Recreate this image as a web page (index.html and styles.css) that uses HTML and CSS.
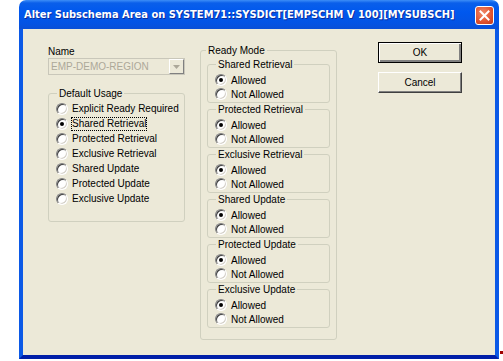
FILE: index.html
```html
<!DOCTYPE html>
<html lang="en">
<head>
    <meta charset="UTF-8">
    <title>Alter Subschema Area</title>
    <link rel="stylesheet" href="styles.css">
</head>
<body>
    <div class="window">
        <div class="titlebar">
            <span class="title">Alter Subschema Area on SYSTEM71::SYSDICT[EMPSCHM V 100][MYSUBSCH]</span>
            <span class="close">
                <svg width="11" height="11" viewBox="0 0 11 11"><path d="M1.5 1.5 L9.5 9.5 M9.5 1.5 L1.5 9.5" stroke="#fff" stroke-width="2" stroke-linecap="square"/></svg>
            </span>
        </div>
        <div class="client">
            <div class="left">
                <div class="name-label">Name</div>
                <div class="combo">
                    <span class="combo-text">EMP-DEMO-REGION</span>
                    <span class="combo-btn">
                        <svg width="7" height="4" viewBox="0 0 7 4"><path d="M0 0 H7 L3.5 4 Z" fill="#aca899"/></svg>
                    </span>
                </div>
                <fieldset class="group usage">
                    <legend>Default Usage</legend>
                    <div class="opt"><span class="radio"></span><span>Explicit Ready Required</span></div>
                    <div class="opt"><span class="radio on"></span><span class="focus">Shared Retrieval</span></div>
                    <div class="opt"><span class="radio"></span><span>Protected Retrieval</span></div>
                    <div class="opt"><span class="radio"></span><span>Exclusive Retrieval</span></div>
                    <div class="opt"><span class="radio"></span><span>Shared Update</span></div>
                    <div class="opt"><span class="radio"></span><span>Protected Update</span></div>
                    <div class="opt"><span class="radio"></span><span>Exclusive Update</span></div>
                </fieldset>
            </div>

            <fieldset class="group ready">
                <legend>Ready Mode</legend>
                <fieldset class="group sub">
                    <legend>Shared Retrieval</legend>
                    <div class="opt"><span class="radio on"></span><span>Allowed</span></div>
                    <div class="opt"><span class="radio"></span><span>Not Allowed</span></div>
                </fieldset>
                <fieldset class="group sub">
                    <legend>Protected Retrieval</legend>
                    <div class="opt"><span class="radio on"></span><span>Allowed</span></div>
                    <div class="opt"><span class="radio"></span><span>Not Allowed</span></div>
                </fieldset>
                <fieldset class="group sub">
                    <legend>Exclusive Retrieval</legend>
                    <div class="opt"><span class="radio on"></span><span>Allowed</span></div>
                    <div class="opt"><span class="radio"></span><span>Not Allowed</span></div>
                </fieldset>
                <fieldset class="group sub">
                    <legend>Shared Update</legend>
                    <div class="opt"><span class="radio on"></span><span>Allowed</span></div>
                    <div class="opt"><span class="radio"></span><span>Not Allowed</span></div>
                </fieldset>
                <fieldset class="group sub">
                    <legend>Protected Update</legend>
                    <div class="opt"><span class="radio on"></span><span>Allowed</span></div>
                    <div class="opt"><span class="radio"></span><span>Not Allowed</span></div>
                </fieldset>
                <fieldset class="group sub">
                    <legend>Exclusive Update</legend>
                    <div class="opt"><span class="radio on"></span><span>Allowed</span></div>
                    <div class="opt"><span class="radio"></span><span>Not Allowed</span></div>
                </fieldset>
            </fieldset>

            <div class="buttons">
                <div class="btn default">OK</div>
                <div class="btn">Cancel</div>
            </div>
        </div>
    </div>
    <span class="stray"></span>
</body>
</html>
```

FILE: styles.css
```css
body {
    margin: 0;
    background: #fff;
    font-family: "Liberation Sans", Arial, sans-serif;
    font-size: 10px;
    color: #000;
}

.window {
    margin-left: 19px;
    width: 480px;
    height: 359px;
    display: flex;
    flex-direction: column;
}

.titlebar {
    height: 29px;
    display: flex;
    align-items: center;
    padding: 0 5px 0 5px;
    border-radius: 7px 7px 0 0;
    background: linear-gradient(#3d8ef7 0, #0a5fea 3px, #0058ee 12px, #0453e3 24px, #0a4fd6 29px);
}

.title {
    flex: 1;
    min-width: 0;
    overflow: hidden;
    color: #fff;
    font-family: "DejaVu Sans Condensed", "DejaVu Sans", sans-serif;
    font-weight: bold;
    font-size: 11px;
    text-shadow: 1px 1px 0 #0b2c9c;
    white-space: nowrap;
}

.close {
    width: 19px;
    height: 19px;
    flex: none;
    box-sizing: border-box;
    border: 1px solid #fff;
    border-radius: 3px;
    background: radial-gradient(circle at 40% 35%, #f08a6a, #e2522e 60%, #c23a1a);
    display: flex;
    align-items: center;
    justify-content: center;
    margin-top: 1px;
}

.client {
    flex: 1;
    display: flex;
    align-items: flex-start;
    background: #ece9d8;
    border: 4px solid #0b59e6;
    border-top: none;
    border-bottom-color: #001ea8;
    padding: 14px 0 0 25px;
}

.left {
    width: 137px;
    padding-top: 2px;
}

.name-label {
    line-height: 13px;
}

.combo {
    height: 17px;
    display: flex;
    align-items: stretch;
    border: 1px solid #c9c7ba;
    box-sizing: border-box;
    margin-bottom: 12px;
}

.combo-text {
    flex: 1;
    color: #aca899;
    line-height: 15px;
    padding-left: 2px;
}

.combo-btn {
    width: 15px;
    display: flex;
    align-items: center;
    justify-content: center;
    background: #ece9d8;
    border: 1px solid;
    border-color: #fff #808080 #808080 #fff;
    box-sizing: border-box;
}

.group {
    margin: 0;
    min-width: 0;
    border: 1px solid #d0d0bf;
    border-radius: 3px;
    padding: 1px 6px 15px 7px;
}

.group legend {
    padding: 0 2px;
    margin-left: 1px;
    line-height: 13px;
}

.opt {
    display: flex;
    align-items: center;
    height: 15px;
    white-space: nowrap;
}

.radio {
    width: 12px;
    height: 12px;
    box-sizing: border-box;
    border-radius: 50%;
    border: 1px solid;
    border-color: #808080 #fff #fff #808080;
    box-shadow: inset 1px 1px 0 #404040, inset -1px -1px 0 #d4d0c8;
    background: #fff;
    margin-right: 4px;
    display: flex;
    align-items: center;
    justify-content: center;
    flex: none;
}

.radio.on::after {
    content: "";
    width: 4px;
    height: 4px;
    border-radius: 50%;
    background: #000;
}

.focus {
    outline: 1px dotted #000;
    outline-offset: 0;
    line-height: 12px;
}

.ready {
    width: 137px;
    box-sizing: border-box;
    margin-left: 15px;
    margin-top: 1px;
    padding: 1px 6px 11px 6px;
}

.ready > legend {
    margin-left: -1px;
}

.sub {
    padding: 2px 6px 1px 7px;
}

.sub .opt {
    height: 14px;
}

.buttons {
    margin-left: 41px;
    margin-top: -1px;
    width: 84px;
    display: flex;
    flex-direction: column;
    gap: 9px;
}

.btn {
    height: 21px;
    box-sizing: border-box;
    display: flex;
    align-items: center;
    justify-content: center;
    border: 1px solid;
    border-color: #fff #404040 #404040 #fff;
    box-shadow: inset -1px -1px 0 #808080;
    background: #ece9d8;
}

.btn.default {
    border: 1px solid #000;
    box-shadow: inset 1px 1px 0 #fff, inset -2px -2px 0 #808080;
}

.stray {
    position: absolute;
    left: 500px;
    top: 351px;
    width: 3px;
    height: 3px;
    background: #a00000;
}
```
